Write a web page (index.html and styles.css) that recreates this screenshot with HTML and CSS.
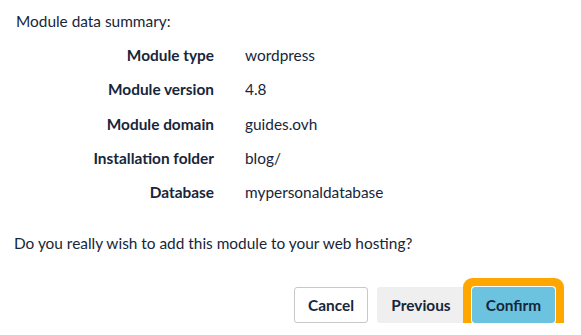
FILE: index.html
```html
<!DOCTYPE html>
<html>
<head>
<meta charset="utf-8">
<link rel="stylesheet" href="styles.css">
</head>
<body>
<div class="panel">
  <p class="intro">Module data summary:</p>
  <dl class="summary">
    <dt>Module type</dt><dd>wordpress</dd>
    <dt>Module version</dt><dd>4.8</dd>
    <dt>Module domain</dt><dd>guides.ovh</dd>
    <dt>Installation folder</dt><dd>blog/</dd>
    <dt>Database</dt><dd>mypersonaldatabase</dd>
  </dl>
  <p class="question">Do you really wish to add this module to your web hosting?</p>
  <div class="actions">
    <button class="btn btn-cancel">Cancel</button>
    <button class="btn btn-prev">Previous</button>
    <button class="btn btn-confirm">Confirm</button>
  </div>
</div>
</body>
</html>
```
FILE: styles.css
```css
html, body {
  margin: 0;
  background: #ffffff;
}
body {
  font-family: "Lato", "Noto Sans", sans-serif;
  font-size: 15.4px;
  color: #17263a;
}
.panel {
  padding: 11px 16px 0 16px;
}
.intro {
  margin: 0;
  line-height: 20px;
}
.summary {
  display: grid;
  grid-template-columns: 198px 1fr;
  column-gap: 31px;
  row-gap: 0;
  margin: 7px 0 0 0;
}
.summary dt {
  font-weight: 700;
  text-align: right;
  line-height: 34.3px;
}
.summary dd {
  margin: 0;
  line-height: 34.3px;
}
.question {
  margin: 24px 0 0 -2px;
  line-height: 20px;
}
.actions {
  display: flex;
  justify-content: flex-end;
  align-items: center;
  margin-top: 34px;
  padding-right: 10px;
}
.btn {
  font-family: inherit;
  font-size: 15.4px;
  font-weight: 700;
  color: #17263a;
  height: 36px;
  border-radius: 3px;
  padding: 0;
  cursor: pointer;
}
.btn-cancel {
  width: 74px;
  background: #ffffff;
  border: 1px solid #c8c8c8;
  margin-right: 9px;
}
.btn-prev {
  width: 88px;
  background: #efefef;
  border: 1px solid #efefef;
  margin-right: 7px;
}
.btn-confirm {
  width: 83px;
  background: #6cc3e0;
  border: 1px solid #6cc3e0;
  box-shadow: 0 0 0 1px #ffffff, 0 0 0 9px #ffa600;
  border-radius: 3px;
}
```
